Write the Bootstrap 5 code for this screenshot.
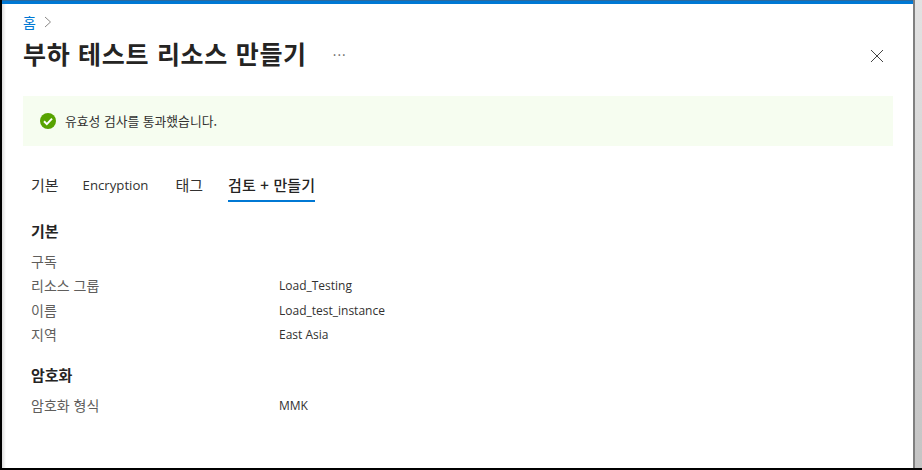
<!DOCTYPE html>
<html lang="ko">
<head>
<meta charset="utf-8">
<title>부하 테스트 리소스 만들기</title>
<link href="https://cdn.jsdelivr.net/npm/bootstrap@5.3.0/dist/css/bootstrap.min.css" rel="stylesheet">
<style>
html,body{height:100%;margin:0;overflow:hidden}
body{font-family:"Noto Sans CJK KR","Open Sans",sans-serif;background:#fff;color:#323130;font-size:13px}
.frame{width:922px;height:470px;display:flex;border-left:2px solid #000;border-bottom:2px solid #000}
.maincol{flex:1;display:flex;flex-direction:column;min-width:0}
.topbar{height:4px;background:#0078d4;border-top:1px solid #2a6aa0;flex:none}
.pane{flex:1;padding:9px 20px 0 21px;min-width:0;background:linear-gradient(90deg,#dcdcdc,#fff 4px)}
.side{width:9px;flex:none;background:linear-gradient(#e2e2e2,#c4c4c4);border-left:2px solid #808080}
.crumb{font-size:14px;line-height:18px;height:18px;color:#0078d4}
.headrow{margin-top:5px;margin-right:9px}
.ttl{font-size:25px;font-weight:700;line-height:34px;margin:0;color:#252423;letter-spacing:.7px}
.more{color:#605e5c;font-size:13px;margin:4px 0 0 26px;letter-spacing:1px}
.closeic{margin-top:5px}
.okbar{background:#f6fdf0;height:50px;margin-top:26px;padding-left:17px;gap:9px}
.okbar span{font-size:12.8px}
.tabbar{gap:24px;margin:20px 0 0 8px;height:36px}
.tabitem{font-size:15px;line-height:24px;height:36px;padding-top:7px;color:#323130}
.tabon{font-weight:500;border-bottom:2px solid #0078d4;color:#252423;margin-left:1px;letter-spacing:.15px}
.latin{font-family:"Open Sans",sans-serif;font-size:13.2px}
.tabgap{margin-left:3px}
.sect{font-size:15px;font-weight:700;line-height:20px;margin:19px 0 8px 8px;color:#252423}
.sect2{margin-top:19px;margin-bottom:8px}
.rowline{display:flex;margin-left:8px;height:24.3px;line-height:24px;font-size:14px}
.lab{width:248px;color:#605e5c}
.val{font-family:"Open Sans",sans-serif;font-size:12px;color:#323130;padding-top:1px}
</style>
</head>
<body>
<div class="frame">
  <div class="maincol">
    <div class="topbar"></div>
    <main class="pane">
      <nav class="crumb d-flex align-items-center gap-2"><span>홈</span>
        <svg width="8" height="12" viewBox="0 0 8 12" aria-hidden="true"><path d="M1 1l5.5 5L1 11" fill="none" stroke="#8a8886" stroke-width="1"/></svg>
      </nav>
      <div class="headrow d-flex align-items-center justify-content-between">
        <div class="d-flex align-items-center"><h1 class="ttl">부하 테스트 리소스 만들기</h1><span class="more">···</span></div>
        <svg class="closeic" width="14" height="14" viewBox="0 0 14 14" aria-label="닫기"><path d="M1 1l12 12M13 1L1 13" stroke="#444" stroke-width="1" fill="none"/></svg>
      </div>
      <div class="okbar d-flex align-items-center">
        <svg width="16" height="16" viewBox="0 0 16 16" aria-hidden="true"><circle cx="8" cy="8" r="8" fill="#57a300"/><path d="M4 8.3l2.8 2.8L12 5.6" fill="none" stroke="#fff" stroke-width="2"/></svg>
        <span>유효성 검사를 통과했습니다.</span>
      </div>
      <div class="tabbar d-flex">
        <div class="tabitem">기본</div>
        <div class="tabitem latin">Encryption</div>
        <div class="tabitem tabgap">태그</div>
        <div class="tabitem tabon">검토 + 만들기</div>
      </div>
      <div class="sect">기본</div>
      <div class="rowline"><div class="lab">구독</div><div class="val"></div></div>
      <div class="rowline"><div class="lab">리소스 그룹</div><div class="val">Load_Testing</div></div>
      <div class="rowline"><div class="lab">이름</div><div class="val">Load_test_instance</div></div>
      <div class="rowline"><div class="lab">지역</div><div class="val">East Asia</div></div>
      <div class="sect sect2">암호화</div>
      <div class="rowline"><div class="lab">암호화 형식</div><div class="val">MMK</div></div>
    </main>
  </div>
  <div class="side"></div>
</div>
<script src="https://cdn.jsdelivr.net/npm/bootstrap@5.3.0/dist/js/bootstrap.bundle.min.js"></script>
</body>
</html>
